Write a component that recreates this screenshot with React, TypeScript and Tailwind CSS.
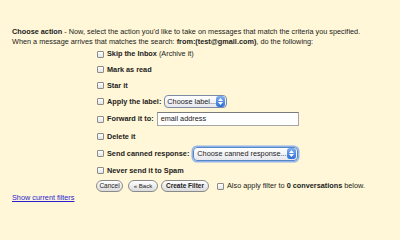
import React from "react";

function Box() {
  return (
    <span className="inline-block w-[7px] h-[7px] border border-[#8c8c8c] rounded-[1px] bg-gradient-to-b from-[#ffffff] to-[#e4e4e4] shrink-0" />
  );
}

function Row({ h, children }: { h: string; children: React.ReactNode }) {
  return <div className={`flex items-center whitespace-nowrap ${h}`}>{children}</div>;
}

function Stepper() {
  return (
    <span className="ml-auto flex h-[11px] w-[9px] shrink-0 flex-col items-center justify-center gap-[1px] rounded-[3px] bg-gradient-to-b from-[#7fb0f0] to-[#2f6fd6]">
      <svg width="5" height="3" viewBox="0 0 5 3"><path d="M0 3 L2.5 0 L5 3Z" fill="#fff" /></svg>
      <svg width="5" height="3" viewBox="0 0 5 3"><path d="M0 0 L2.5 3 L5 0Z" fill="#fff" /></svg>
    </span>
  );
}

export default function App() {
  return (
    <div className="w-[400px] h-[240px] bg-[#fff7d7] font-['Liberation_Sans',Arial,sans-serif] text-[7.3px] text-[#222] pt-[27px] pl-[12px] leading-[10px]">
      <p>
        <b>Choose action</b> - Now, select the action you'd like to take on messages that match the criteria you specified.
      </p>
      <p>
        When a message arrives that matches the search: <b>from:(test@gmail.com)</b>, do the following:
      </p>
      <div className="ml-[85px] flex flex-col">
        <Row h="h-[14px]">
          <Box />
          <span className="ml-[3px]"><b>Skip the Inbox</b> (Archive it)</span>
        </Row>
        <Row h="h-[17px]">
          <Box />
          <b className="ml-[3px]">Mark as read</b>
        </Row>
        <Row h="h-[15px]">
          <Box />
          <b className="ml-[3px]">Star it</b>
        </Row>
        <Row h="h-[17px]">
          <Box />
          <b className="ml-[3px]">Apply the label:</b>
          <span className="ml-[3px] flex h-[13px] w-[63px] items-center overflow-hidden whitespace-nowrap rounded-[4px] border border-[#7d8aa6] bg-gradient-to-b from-[#ffffff] to-[#e6e8ee] pl-[2px] pr-[1px]">
            Choose label...
            <Stepper />
          </span>
        </Row>
        <Row h="h-[18px]">
          <Box />
          <b className="ml-[3px]">Forward it to:</b>
          <span className="ml-[3px] flex h-[14px] w-[142px] items-center border border-[#a5a5a5] border-t-[#7a7a7a] bg-white pl-[3px]">
            email address
          </span>
        </Row>
        <Row h="h-[17px]">
          <Box />
          <b className="ml-[3px]">Delete it</b>
        </Row>
        <Row h="h-[17px]">
          <Box />
          <b className="ml-[3px]">Send canned response:</b>
          <span className="ml-[4px] flex h-[14px] w-[105px] items-center overflow-hidden whitespace-nowrap rounded-[4px] border border-[#5a86c8] bg-gradient-to-b from-[#ffffff] to-[#e6e8ee] pl-[3px] pr-[1px] shadow-[0_0_0_1.5px_#8fb4ec]">
            Choose canned response...
            <Stepper />
          </span>
        </Row>
        <Row h="h-[17px]">
          <Box />
          <b className="ml-[3px]">Never send it to Spam</b>
        </Row>
        <Row h="h-[14px]">
          <span className="-ml-[1px] flex h-[12px] w-[27px] items-center justify-center rounded-full border border-[#8a8a8a] bg-gradient-to-b from-[#ffffff] to-[#dcdcdc] text-[6.5px]">
            Cancel
          </span>
          <span className="ml-[5px] flex h-[12px] w-[30px] items-center justify-center rounded-full border border-[#8a8a8a] bg-gradient-to-b from-[#ffffff] to-[#dcdcdc] text-[6px]">
            « Back
          </span>
          <span className="ml-[3px] flex h-[12px] w-[48px] items-center justify-center rounded-full border border-[#8a8a8a] bg-gradient-to-b from-[#ffffff] to-[#dcdcdc] text-[6.5px] font-bold">
            Create Filter
          </span>
          <span className="ml-[8px] flex items-center">
            <Box />
            <span className="ml-[3px]">Also apply filter to <b>0 conversations</b> below.</span>
          </span>
        </Row>
      </div>
      <a className="block text-[#2a1fd0] underline leading-[10px] mt-[0px]">Show current filters</a>
    </div>
  );
}
